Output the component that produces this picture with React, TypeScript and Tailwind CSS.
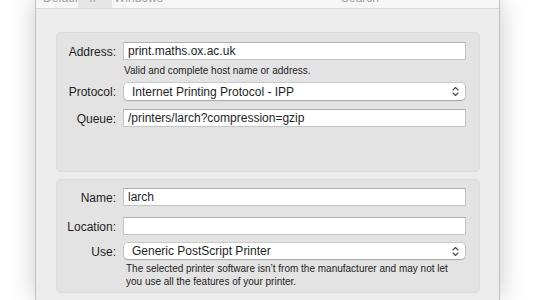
import React from "react";

function Chevrons() {
  return (
    <svg width="7" height="11" viewBox="0 0 7 11" fill="none" className="shrink-0">
      <path d="M1 4 L3.5 1.5 L6 4" stroke="#4a4a4a" strokeWidth="1.1" strokeLinecap="round" strokeLinejoin="round" />
      <path d="M1 7 L3.5 9.5 L6 7" stroke="#4a4a4a" strokeWidth="1.1" strokeLinecap="round" strokeLinejoin="round" />
    </svg>
  );
}

function TextField({ value }: { value: string }) {
  return (
    <div className="h-[18px] bg-white border border-[#c4c4c4] border-t-[#b0b0b0] flex items-center pl-[4px] text-[12px] text-[#1e1e1e] leading-none">
      {value}
    </div>
  );
}

function Popup({ value, h }: { value: string; h: string }) {
  return (
    <div
      className={`${h} ml-[1px] mr-[1px] bg-white rounded-[4px] shadow-[0_0_0_0.5px_rgba(0,0,0,0.22),0_1px_1.5px_rgba(0,0,0,0.18)] flex items-center justify-between pl-[8px] pr-[6px] text-[12px] text-[#1e1e1e] leading-none`}
    >
      <span>{value}</span>
      <Chevrons />
    </div>
  );
}

function Label({ children }: { children: React.ReactNode }) {
  return <div className="text-right text-[12px] text-[#1e1e1e] leading-none pt-[1px]">{children}</div>;
}

export default function App() {
  return (
    <div
      className="w-[536px] h-[300px] bg-white overflow-hidden"
      style={{ fontFamily: '"Liberation Sans", Arial, sans-serif' }}
    >
      <div className="ml-[35px] w-[465px] h-[300px] bg-[#ececec] border-x border-[#c2c2c2] shadow-[0_0_24px_rgba(0,0,0,0.22)] flex flex-col">
        {/* toolbar (mostly cut off) */}
        <div className="h-[9px] bg-[#f6f6f6] border-b border-[#d9d9d9] overflow-hidden shrink-0">
          <div className="mt-[-12px] h-[20px] flex text-[12px] leading-[20px] text-[#a3a3a3]">
            <div className="w-[42px] pl-[7px]">Default</div>
            <div className="w-[34px] bg-[#e6e6e6] text-center">IP</div>
            <div className="pl-[2px] w-[210px]">Windows</div>
            <div className="pl-[19px]">Search</div>
          </div>
        </div>

        <div className="pt-[23px] pl-[20px] pr-[19px] flex flex-col gap-[7px]">
          {/* Panel 1 */}
          <div className="h-[140px] bg-[#e3e3e3] border border-[#dbdbdb] rounded-[5px] pt-[9px] pr-[13px]">
            <div className="grid grid-cols-[59px_1fr] gap-x-[7px] items-center">
              <Label>Address:</Label>
              <TextField value="print.maths.ox.ac.uk" />
              <div />
              <div className="mt-[4px] h-[14px] text-[10px] leading-[14px] text-[#1e1e1e] pl-[1px]">
                Valid and complete host name or address.
              </div>
              <div className="mt-[5px]">
                <Label>Protocol:</Label>
              </div>
              <div className="mt-[5px]">
                <Popup value="Internet Printing Protocol - IPP" h="h-[17px]" />
              </div>
              <div className="mt-[9px]">
                <Label>Queue:</Label>
              </div>
              <div className="mt-[9px]">
                <TextField value="/printers/larch?compression=gzip" />
              </div>
            </div>
          </div>

          {/* Panel 2 */}
          <div className="h-[114px] bg-[#e3e3e3] border border-[#dbdbdb] rounded-[5px] pt-[8px] pr-[13px]">
            <div className="grid grid-cols-[59px_1fr] gap-x-[7px] items-center">
              <Label>Name:</Label>
              <TextField value="larch" />
              <div className="mt-[11px]">
                <Label>Location:</Label>
              </div>
              <div className="mt-[11px]">
                <TextField value="" />
              </div>
              <div className="mt-[8px]">
                <Label>Use:</Label>
              </div>
              <div className="mt-[8px]">
                <Popup value="Generic PostScript Printer" h="h-[16px]" />
              </div>
              <div />
              <div className="mt-[4px] text-[10px] leading-[12.5px] text-[#1e1e1e] pl-[3px]">
                The selected printer software isn’t from the manufacturer and may not let
                <br />
                you use all the features of your printer.
              </div>
            </div>
          </div>
        </div>
      </div>
    </div>
  );
}
